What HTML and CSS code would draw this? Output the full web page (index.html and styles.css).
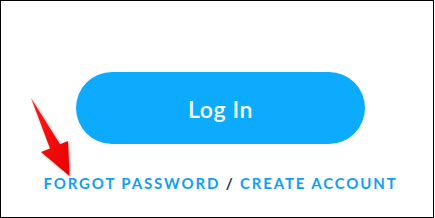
FILE: index.html
```html
<!DOCTYPE html>
<html>
<head>
<meta charset="utf-8">
<link rel="stylesheet" href="styles.css">
</head>
<body>
<div class="frame">
  <button class="login">Log In</button>
  <div class="links"><span class="link">FORGOT PASSWORD</span> <span class="sep">/</span> <span class="link">CREATE ACCOUNT</span></div>
  <svg class="arrow" width="80" height="190" viewBox="0 0 80 190">
    <defs>
      <linearGradient id="ag" x1="0" y1="0" x2="1" y2="1">
        <stop offset="0" stop-color="#ff1a1a"/>
        <stop offset="1" stop-color="#e80000"/>
      </linearGradient>
    </defs>
    <polygon class="arrow-shape" fill="url(#ag)" points="31,98 60,144.3 68,141 69.5,176 41,152 50,148.4"/>
  </svg>
</div>
</body>
</html>
```

FILE: styles.css
```css
html, body {
  margin: 0;
  padding: 0;
  background: #fff;
}
.frame {
  position: relative;
  box-sizing: border-box;
  width: 434px;
  height: 218px;
  border: 1px solid #000;
  display: flex;
  flex-direction: column;
  align-items: center;
  padding-top: 71px;
  font-family: Lato, "Noto Sans", sans-serif;
}
.login {
  width: 289px;
  height: 72px;
  margin-left: 7px;
  border: none;
  border-radius: 36px;
  background: #0cabfd;
  color: #fff;
  font-family: Lato, "Noto Sans", sans-serif;
  font-weight: 600;
  font-size: 23px;
  letter-spacing: 0.6px;
  padding: 0;
  padding-top: 2px;
}
.links {
  margin-top: 29px;
  margin-left: 7px;
  font-size: 15px;
  font-weight: 700;
  letter-spacing: 1.85px;
  color: #0f9ff2;
  line-height: 20px;
  white-space: nowrap;
}
.sep {
  color: #1b2740;
}
.arrow {
  position: absolute;
  left: -1px;
  top: -1px;
  overflow: visible;
}
.arrow-shape {
  filter: drop-shadow(1px 1px 1.5px rgba(0,0,0,0.35));
}
```
